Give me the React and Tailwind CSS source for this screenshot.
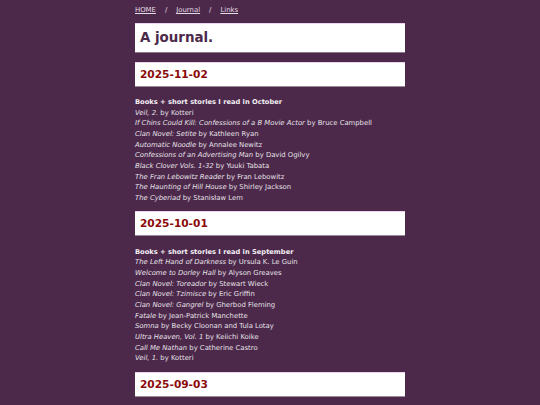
import React from "react";

const sections = [
  {
    date: "2025-11-02",
    mt: "mt-[9px]",
    tmt: "mt-[10px]",
    title: "Books + short stories I read in October",
    items: [
      ["Veil, 2.", "Kotteri"],
      ["If Chins Could Kill: Confessions of a B Movie Actor", "Bruce Campbell"],
      ["Clan Novel: Setite", "Kathleen Ryan"],
      ["Automatic Noodle", "Annalee Newitz"],
      ["Confessions of an Advertising Man", "David Ogilvy"],
      ["Black Clover Vols. 1-32", "Yuuki Tabata"],
      ["The Fran Lebowitz Reader", "Fran Lebowitz"],
      ["The Haunting of Hill House", "Shirley Jackson"],
      ["The Cyberiad", "Stanisław Lem"],
    ],
  },
  {
    date: "2025-10-01",
    mt: "mt-[7px]",
    tmt: "mt-[11px]",
    title: "Books + short stories I read in September",
    items: [
      ["The Left Hand of Darkness", "Ursula K. Le Guin"],
      ["Welcome to Dorley Hall", "Alyson Greaves"],
      ["Clan Novel: Toreador", "Stewart Wieck"],
      ["Clan Novel: Tzimisce", "Eric Griffin"],
      ["Clan Novel: Gangrel", "Gherbod Fleming"],
      ["Fatale", "Jean-Patrick Manchette"],
      ["Somna", "Becky Cloonan and Tula Lotay"],
      ["Ultra Heaven, Vol. 1", "Keiichi Koike"],
      ["Call Me Nathan", "Catherine Castro"],
      ["Veil, 1.", "Kotteri"],
    ],
  },
  { date: "2025-09-03", mt: "mt-[8px]", tmt: "", title: null, items: [] },
];

export default function App() {
  return (
    <div
      className="min-h-[405px] w-full bg-[#4c294b] overflow-hidden"
      style={{ fontFamily: '"DejaVu Sans", Verdana, sans-serif' }}
    >
      <div className="w-[270px] mx-auto pt-[5px]">
        <nav className="flex gap-[9px] text-[6.9px] leading-[10px] text-[#e4dce4]">
          <a className="underline">HOME</a>
          <span>/</span>
          <a className="underline">Journal</a>
          <span>/</span>
          <a className="underline">Links</a>
        </nav>
        <div className="mt-[8px] h-[30px] bg-white border-t border-t-[#ecd4ec] border-b border-b-[#8a7a8a] flex items-center px-[5px]">
          <h1 className="text-[13.4px] font-bold text-[#4c294b] leading-none">A journal.</h1>
        </div>
        {sections.map((s) => (
          <div key={s.date} className={s.mt}>
            <div className="h-[25px] bg-white border-t border-t-[#ecd4ec] border-b border-b-[#9a8a9a] flex items-center px-[5px]">
              <h2 className="text-[10.6px] font-bold text-[#8b0a0a] leading-none">{s.date}</h2>
            </div>
            {s.title && (
              <div className={`${s.tmt} text-[6.85px] leading-[10.67px] text-[#e6e0e6]`}>
                <div className="font-bold text-[6.7px] text-[#f2eef2]">{s.title}</div>
                {s.items.map(([t, a]) => (
                  <div key={t}>
                    <i>{t}</i> by {a}
                  </div>
                ))}
              </div>
            )}
          </div>
        ))}
      </div>
    </div>
  );
}
